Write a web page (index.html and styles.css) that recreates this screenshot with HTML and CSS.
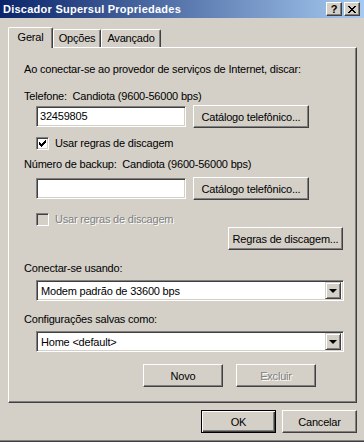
FILE: index.html
```html
<!DOCTYPE html>
<html>
<head>
<meta charset="utf-8">
<link rel="stylesheet" href="styles.css">
</head>
<body>
<div class="window">
  <div class="titlebar">
    <span class="title">Discador Supersul Propriedades</span>
    <div class="tbtns">
      <span class="tbtn help">?</span>
      <span class="tbtn close"><svg width="8" height="7" viewBox="0 0 8 7" shape-rendering="crispEdges"><path d="M0 0h2v1h1v1h2v-1h1v-1h2v1h-1v1h-1v1h-1v1h1v1h1v1h1v1h-2v-1h-1v-1h-2v1h-1v1h-2v-1h1v-1h1v-1h1v-1h-1v-1h-1v-1h-1z" fill="#000"/></svg></span>
    </div>
  </div>

  <div class="tabs">
    <div class="tab active t-geral">Geral</div>
    <div class="tab t-opcoes">Opções</div>
    <div class="tab t-avancado">Avançado</div>
  </div>

  <div class="panel">
    <div class="label intro">Ao conectar-se ao provedor de serviços de Internet, discar:</div>
    <div class="label l-tel">Telefone:&nbsp; Candiota (9600-56000 bps)</div>
    <div class="row r-tel">
      <div class="textbox">32459805</div>
      <div class="btn wide">Catálogo telefônico...</div>
    </div>
    <div class="check c-tel">
      <span class="box"><svg width="7" height="7" viewBox="0 0 7 7" shape-rendering="crispEdges"><path d="M6 0h1v3h-1v1h-1v1h-1v1h-1v1h-1v-1h-1v-1h-1v-3h1v1h1v1h1v-1h1v-1h1z" fill="#000"/></svg></span>
      <span>Usar regras de discagem</span>
    </div>

    <div class="label l-backup">Número de backup:&nbsp; Candiota (9600-56000 bps)</div>
    <div class="row r-backup">
      <div class="textbox"></div>
      <div class="btn wide">Catálogo telefônico...</div>
    </div>
    <div class="check disabled c-backup">
      <span class="box"></span>
      <span>Usar regras de discagem</span>
    </div>

    <div class="row r-rules">
      <div class="btn rules">Regras de discagem...</div>
    </div>

    <div class="label l-conn">Conectar-se usando:</div>
    <div class="combo c-conn">
      <span class="combo-text">Modem padrão de 33600 bps</span>
      <span class="combo-btn"><span class="arrow"></span></span>
    </div>

    <div class="label l-conf">Configurações salvas como:</div>
    <div class="combo c-conf">
      <span class="combo-text">Home &lt;default&gt;</span>
      <span class="combo-btn"><span class="arrow"></span></span>
    </div>

    <div class="row r-new">
      <div class="btn mid">Novo</div>
      <div class="btn mid disabled-btn">Excluir</div>
    </div>
  </div>

  <div class="footer">
    <div class="btn std default">OK</div>
    <div class="btn std">Cancelar</div>
  </div>
</div>
</body>
</html>
```

FILE: styles.css
```css
* { box-sizing: border-box; }

html, body {
  margin: 0;
  padding: 0;
  background: #d4d0c8;
}

body {
  font-family: Tahoma, "Liberation Sans", Arial, sans-serif;
  font-size: 11px;
  letter-spacing: -0.2px;
  color: #000;
  overflow: hidden;
}

.window {
  width: 364px;
  height: 442px;
  display: flex;
  flex-direction: column;
  border-bottom: 1px solid #404040;
  box-shadow: inset 0 -1px #808080;
}

/* Title bar */
.titlebar {
  height: 18px;
  flex: none;
  display: flex;
  align-items: center;
  padding-left: 3px;
  padding-right: 4px;
  background: linear-gradient(to right, #0a246a, #a6caf0);
}

.title {
  color: #fff;
  font-weight: bold;
  font-size: 11px;
  letter-spacing: 0.25px;
}

.tbtns {
  margin-left: auto;
  display: flex;
  gap: 2px;
}

.tbtn {
  width: 16px;
  height: 14px;
  background: #d4d0c8;
  border: 1px solid;
  border-color: #fff #404040 #404040 #fff;
  box-shadow: inset -1px -1px #808080;
  display: flex;
  align-items: center;
  justify-content: center;
  font-weight: bold;
  font-size: 11px;
  letter-spacing: 0;
  line-height: 1;
}

/* Tabs */
.tabs {
  flex: none;
  margin-top: 9px;
  padding-left: 8px;
  height: 20px;
  display: flex;
  align-items: flex-end;
  position: relative;
  z-index: 2;
}

.tab {
  height: 18px;
  background: #d4d0c8;
  border-left: 1px solid #fff;
  border-top: 1px solid #fff;
  border-right: 1px solid #404040;
  box-shadow: inset -1px 0 #808080;
  border-top-left-radius: 2px;
  border-top-right-radius: 2px;
  display: flex;
  align-items: center;
  justify-content: center;
  padding-bottom: 1px;
}

.tab.active {
  height: 21px;
  margin-bottom: -1px;
  padding-bottom: 2px;
}

.t-geral { width: 45px; }
.t-opcoes { width: 48px; }
.t-avancado { width: 60px; }

/* Panel */
.panel {
  flex: none;
  margin-left: 8px;
  width: 349px;
  height: 356px;
  border: 1px solid;
  border-color: #fff #404040 #404040 #fff;
  box-shadow: inset -1px -1px #808080;
  padding: 15px 0 0 15px;
  display: flex;
  flex-direction: column;
  position: relative;
  z-index: 1;
}

.label {
  height: 13px;
  line-height: 13px;
  white-space: nowrap;
}

.l-tel { margin-top: 14px; }
.l-backup { margin-top: 8px; }
.l-conn { margin-top: 12px; }
.l-conf { margin-top: 12px; }

.row {
  display: flex;
  align-items: center;
  height: 23px;
  margin-left: 12px;
}

.r-tel { margin-top: 2px; }
.r-backup { margin-top: 6px; }
.r-rules {
  margin-top: 1px;
  justify-content: flex-end;
  margin-right: 13px;
}
.r-new {
  margin-top: 12px;
  margin-left: 119px;
  gap: 13px;
}

.textbox {
  width: 150px;
  height: 21px;
  background: #fff;
  border: 1px solid;
  border-color: #808080 #fff #fff #808080;
  box-shadow: inset 1px 1px #404040, inset -1px -1px #d4d0c8;
  padding-left: 3px;
  line-height: 19px;
}

.btn {
  height: 23px;
  background: #d4d0c8;
  border: 1px solid;
  border-color: #fff #404040 #404040 #fff;
  box-shadow: inset -1px -1px #808080;
  display: flex;
  align-items: center;
  justify-content: center;
  white-space: nowrap;
}

.btn.wide { width: 116px; margin-left: 7px; }
.btn.rules { width: 115px; }
.btn.mid { width: 80px; }
.btn.std { width: 75px; }

.btn.default {
  border-color: #000;
  box-shadow: inset 1px 1px #fff, inset -1px -1px #404040, inset -2px -2px #808080;
}

.disabled-btn {
  color: #808080;
  text-shadow: 1px 1px #fff;
}

/* Checkbox */
.check {
  display: flex;
  align-items: center;
  gap: 6px;
  height: 13px;
  margin-left: 12px;
  line-height: 13px;
}

.c-tel { margin-top: 9px; }
.c-backup { margin-top: 13px; }

.box {
  width: 13px;
  height: 13px;
  flex: none;
  background: #fff;
  border: 1px solid;
  border-color: #808080 #fff #fff #808080;
  box-shadow: inset 1px 1px #404040, inset -1px -1px #d4d0c8;
  display: flex;
  align-items: center;
  justify-content: center;
}

.check.disabled .box {
  background: #d4d0c8;
}

.check.disabled span + span {
  color: #808080;
  text-shadow: 1px 1px #fff;
}

/* Combo */
.combo {
  margin-left: 12px;
  width: 308px;
  height: 21px;
  background: #fff;
  border: 1px solid;
  border-color: #808080 #fff #fff #808080;
  box-shadow: inset 1px 1px #404040, inset -1px -1px #d4d0c8;
  display: flex;
  align-items: center;
  padding: 2px 2px 2px 4px;
}

.c-conn { margin-top: 5px; }
.c-conf { margin-top: 5px; }

.combo-text {
  flex: 1;
  white-space: nowrap;
}

.combo-btn {
  width: 16px;
  height: 17px;
  background: #d4d0c8;
  border: 1px solid;
  border-color: #d4d0c8 #404040 #404040 #d4d0c8;
  box-shadow: inset 1px 1px #fff, inset -1px -1px #808080;
  display: flex;
  align-items: center;
  justify-content: center;
}

.arrow {
  width: 0;
  height: 0;
  border-left: 4px solid transparent;
  border-right: 4px solid transparent;
  border-top: 4px solid #000;
  margin-left: -1px;
}

/* Footer */
.footer {
  flex: none;
  margin-top: 7px;
  display: flex;
  justify-content: flex-end;
  gap: 6px;
  padding-right: 7px;
}
```
